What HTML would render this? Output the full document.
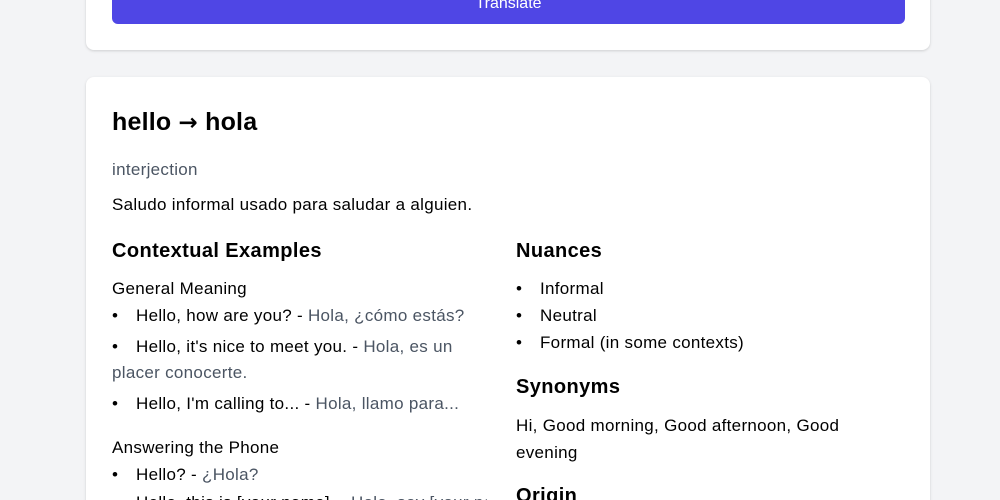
<!DOCTYPE html>
<html><head><meta charset="utf-8"><style>
*{margin:0;padding:0;box-sizing:border-box}
html,body{width:1000px;height:500px;overflow:hidden}
body{background:#f3f4f6;font-family:"Liberation Sans",Arial,sans-serif;color:#000;position:relative}
.card{position:absolute;left:86px;width:844px;background:#fff;border-radius:8px;box-shadow:0 1px 3px rgba(0,0,0,.1),0 1px 2px rgba(0,0,0,.06)}
.btn{position:absolute;left:112px;top:-16px;width:793px;height:40px;background:#4f46e5;border-radius:6px;color:#fff;font-size:16px;text-align:center;line-height:40px}
.a{position:absolute;white-space:nowrap}
.g{color:#4b5563}
h1{font-size:25px;font-weight:bold;letter-spacing:.2px}
h3{font-size:20px;font-weight:bold;letter-spacing:.4px}
.t{font-size:17px;letter-spacing:.3px}
.b{display:inline-block;width:24px}
</style></head><body>
<div class="card" style="top:-20px;height:70px"></div>
<div class="btn">Translate</div>
<div class="card" style="top:77px;height:450px"></div>

<h1 class="a" style="left:112px;top:108px">hello <span style="font-family:'DejaVu Sans',sans-serif;font-size:23px">→</span> hola</h1>
<div class="a t g" style="left:112px;top:160px">interjection</div>
<div class="a t" style="left:112px;top:195px">Saludo informal usado para saludar a alguien.</div>

<h3 class="a" style="left:112px;top:240px">Contextual Examples</h3>
<div class="a t" style="left:112px;top:279px">General Meaning</div>
<div class="a t" style="left:112px;top:306px"><span class="b">•</span>Hello, how are you? - <span class="g">Hola, ¿cómo estás?</span></div>
<div class="a t" style="left:112px;top:337px"><span class="b">•</span>Hello, it's nice to meet you. - <span class="g">Hola, es un</span></div>
<div class="a t g" style="left:112px;top:363px">placer conocerte.</div>
<div class="a t" style="left:112px;top:394px"><span class="b">•</span>Hello, I'm calling to... - <span class="g">Hola, llamo para...</span></div>
<div class="a t" style="left:112px;top:438px">Answering the Phone</div>
<div class="a t" style="left:112px;top:465px"><span class="b">•</span>Hello? - <span class="g">¿Hola?</span></div>
<div class="a t" style="left:112px;top:493px;width:375px;overflow:hidden"><span class="b">•</span>Hello, this is [your name]. - <span class="g">Hola, soy [your name]</span></div>

<h3 class="a" style="left:516px;top:240px">Nuances</h3>
<div class="a t" style="left:516px;top:279px"><span class="b">•</span>Informal</div>
<div class="a t" style="left:516px;top:306px"><span class="b">•</span>Neutral</div>
<div class="a t" style="left:516px;top:333px"><span class="b">•</span>Formal (in some contexts)</div>
<h3 class="a" style="left:516px;top:376px">Synonyms</h3>
<div class="a t" style="left:516px;top:416px">Hi, Good morning, Good afternoon, Good</div>
<div class="a t" style="left:516px;top:443px">evening</div>
<h3 class="a" style="left:516px;top:485px">Origin</h3>
</body></html>
